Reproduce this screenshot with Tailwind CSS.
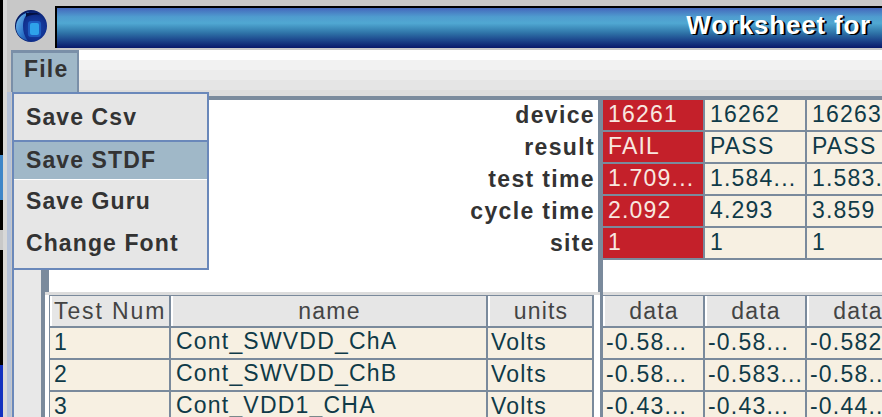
<!DOCTYPE html>
<html lang="en">
<head>
    <meta charset="UTF-8">
    <meta name="viewport" content="width=device-width, initial-scale=1.0">
    <title>Worksheet</title>
    <script src="https://cdn.jsdelivr.net/npm/@tailwindcss/browser@4"></script>
</head>
<body class="w-[882px] h-[417px] overflow-hidden relative flex bg-[#c8c8c8] font-['Liberation_Sans',Arial,sans-serif]">
    <!-- desktop edge behind the window -->
    <div class="w-[3px] h-full shrink-0 flex flex-col bg-black">
        <div class="h-[155px]"></div>
        <div class="h-[45px] bg-[#3f86c8]"></div>
        <div class="h-[30px] bg-black"></div>
        <div class="h-[20px] bg-[#c8c8c8]"></div>
        <div class="h-[115px] bg-black"></div>
        <div class="flex-1 bg-[#1030c0]"></div>
    </div>
    <div class="w-[4px] h-full shrink-0 bg-[#d8d8d8]"></div>

    <div class="w-[875px] h-full shrink-0 flex flex-col">
        <!-- title row -->
        <div class="h-[50px] shrink-0 flex pt-[6px]">
            <div class="w-[48px] shrink-0 pl-[8px] pt-[4px]">
                <svg width="32" height="32" viewBox="0 0 32 32">
                    <defs>
                        <radialGradient id="ball" cx="0.62" cy="0.58" r="0.62">
                            <stop offset="0" stop-color="#1a4ab0"/>
                            <stop offset="0.6" stop-color="#10308f"/>
                            <stop offset="1" stop-color="#061a60"/>
                        </radialGradient>
                        <linearGradient id="rim" x1="0" y1="0" x2="1" y2="1">
                            <stop offset="0" stop-color="#7cc4ee"/>
                            <stop offset="0.6" stop-color="#2f78cc"/>
                            <stop offset="1" stop-color="#14409c"/>
                        </linearGradient>
                    </defs>
                    <circle cx="16" cy="16" r="16" fill="url(#ball)"/>
                    <path d="M14 2 C6 4 1 10 1 17 C1 24 6 29 13 31 C9 26 8 21 8 16 C8 10 10 6 14 2 Z" fill="url(#rim)"/>
                    <path d="M11 3 H22 L25 5 C20 4 15 5 11 7 Z" fill="#04103f"/>
                    <rect x="13" y="11" width="13" height="16" rx="3" fill="#1d5cc0"/>
                    <rect x="15" y="13" width="9" height="12" rx="2" fill="#2ea2ea"/>
                </svg>
            </div>
            <div class="h-[42px] flex-1 border-l-2 border-t-2 border-black flex justify-end pr-[11px] pt-[1px] bg-[linear-gradient(to_bottom,#4468bc_0%,#4f9ccf_22%,#50a8d2_38%,#2f74a8_62%,#1f4c90_78%,#08186a_100%)]">
                <span class="text-white font-bold text-[26px] leading-[32px] tracking-[0.8px] whitespace-nowrap [text-shadow:2px_1px_0_#000]">Worksheet for</span>
            </div>
        </div>

        <!-- menu bar -->
        <div class="h-[42px] shrink-0 flex">
            <div class="ml-[4px] w-[68px] h-[42px] shrink-0 bg-[#a0b8c8] border-t-[3px] border-l-[2px] border-r-[2px] border-[#7a8fa8] pl-[11px] text-[#333] font-bold text-[23px] leading-[32px] tracking-[1.2px]">File</div>
            <div class="flex-1 bg-white pt-[10px]">
                <div class="h-[10px] bg-[#f2f2f2]"></div>
                <div class="h-[10px] bg-[#ececec]"></div>
                <div class="h-[10px] bg-[#e5e5e5]"></div>
                <div class="h-[2px] bg-[#dcdcdc]"></div>
            </div>
        </div>

        <!-- body -->
        <div class="flex-1 flex min-h-0">
            <div class="w-[4px] shrink-0 bg-[#b4c2da]"></div>
            <div class="w-[1px] shrink-0 bg-[#c8c8c8]"></div>
            <div class="w-[2px] shrink-0 bg-[#6a88ba]"></div>
            <div class="w-[27px] shrink-0 bg-[#e8e8e8]"></div>
            <div class="w-[4px] shrink-0 bg-[#7a8a9c]"></div>

            <div class="flex-1 min-w-0 flex flex-col">
                <!-- upper panes -->
                <div class="h-[200px] shrink-0 flex flex-col bg-white">
                    <div class="h-[4px] shrink-0 bg-[#dcdcdc]"></div>
                    <div class="h-[4px] shrink-0 bg-[#7a8a9c]"></div>
                    <div class="flex-1 min-h-0 flex">
                        <div class="w-[4px] shrink-0 bg-[#7a8a9c]"></div>
                        <div class="w-[549px] shrink-0 pr-[3px] text-right text-[#333] font-bold text-[23px] leading-[30px] tracking-[1.35px]">
                            <div class="h-[32px]">device</div>
                            <div class="h-[32px]">result</div>
                            <div class="h-[32px]">test time</div>
                            <div class="h-[32px]">cycle time</div>
                            <div class="h-[32px]">site</div>
                        </div>
                        <div class="w-[5px] shrink-0 bg-[#7a8a9c]"></div>
                        <div class="flex-1 min-w-0">
                            <div class="grid w-max grid-cols-[100px_100px_100px] auto-rows-[30px] gap-[2px] pb-[2px] bg-[#7a8a9c] text-[23px] leading-[28px] tracking-[1.2px] whitespace-nowrap">
                                <div class="bg-[#c4202a] text-[#f8e8e0] pl-[5px]">16261</div>
                                <div class="bg-[#f7f0e2] text-[#0f3a48] pl-[5px]">16262</div>
                                <div class="bg-[#f7f0e2] text-[#0f3a48] pl-[5px]">16263</div>
                                <div class="bg-[#c4202a] text-[#f8e8e0] pl-[5px]">FAIL</div>
                                <div class="bg-[#f7f0e2] text-[#0f3a48] pl-[5px]">PASS</div>
                                <div class="bg-[#f7f0e2] text-[#0f3a48] pl-[5px]">PASS</div>
                                <div class="bg-[#c4202a] text-[#f8e8e0] pl-[5px]">1.709...</div>
                                <div class="bg-[#f7f0e2] text-[#0f3a48] pl-[5px]">1.584...</div>
                                <div class="bg-[#f7f0e2] text-[#0f3a48] pl-[5px]">1.583...</div>
                                <div class="bg-[#c4202a] text-[#f8e8e0] pl-[5px]">2.092</div>
                                <div class="bg-[#f7f0e2] text-[#0f3a48] pl-[5px]">4.293</div>
                                <div class="bg-[#f7f0e2] text-[#0f3a48] pl-[5px]">3.859</div>
                                <div class="bg-[#c4202a] text-[#f8e8e0] pl-[5px]">1</div>
                                <div class="bg-[#f7f0e2] text-[#0f3a48] pl-[5px]">1</div>
                                <div class="bg-[#f7f0e2] text-[#0f3a48] pl-[5px]">1</div>
                            </div>
                        </div>
                    </div>
                </div>

                <!-- lower panes -->
                <div class="flex-1 min-h-0 flex bg-white text-[23px] leading-[28px] tracking-[1.2px] whitespace-nowrap">
                    <div class="w-[555px] shrink-0 pl-[4px] border-t-[3px] border-[#dcdcdc]">
                        <div class="grid w-max grid-cols-[119px_315px_104px] auto-rows-[30px] gap-[2px] py-[1px] pl-[1px] pr-[2px] bg-[#7a8a9c]">
                            <div class="bg-[#e6e6e6] text-[#444] leading-[31px] tracking-[1.9px] border-l-2 border-white pl-[2px]">Test Num</div>
                            <div class="bg-[#e6e6e6] text-[#444] leading-[31px] border-l-2 border-white text-center">name</div>
                            <div class="bg-[#e6e6e6] text-[#444] leading-[31px] border-l-2 border-white text-center">units</div>
                            <div class="bg-[#f7f0e2] text-[#0f3a48] pl-[4px]">1</div>
                            <div class="bg-[#f7f0e2] text-[#0f3a48] leading-[26px] pl-[5px]">Cont_SWVDD_ChA</div>
                            <div class="bg-[#f7f0e2] text-[#0f3a48] pl-[3px]">Volts</div>
                            <div class="bg-[#f7f0e2] text-[#0f3a48] pl-[4px]">2</div>
                            <div class="bg-[#f7f0e2] text-[#0f3a48] leading-[26px] pl-[5px]">Cont_SWVDD_ChB</div>
                            <div class="bg-[#f7f0e2] text-[#0f3a48] pl-[3px]">Volts</div>
                            <div class="bg-[#f7f0e2] text-[#0f3a48] pl-[4px]">3</div>
                            <div class="bg-[#f7f0e2] text-[#0f3a48] leading-[26px] pl-[5px]">Cont_VDD1_CHA</div>
                            <div class="bg-[#f7f0e2] text-[#0f3a48] pl-[3px]">Volts</div>
                        </div>
                    </div>
                    <div class="w-[3px] shrink-0 bg-[#7a8a9c]"></div>
                    <div class="flex-1 min-w-0 border-t-[3px] border-[#dcdcdc]">
                        <div class="grid w-max grid-cols-[100px_100px_100px] auto-rows-[30px] gap-[2px] py-[1px] bg-[#7a8a9c]">
                            <div class="bg-[#e6e6e6] text-[#444] leading-[31px] border-l-2 border-white text-center">data</div>
                            <div class="bg-[#e6e6e6] text-[#444] leading-[31px] border-l-2 border-white text-center">data</div>
                            <div class="bg-[#e6e6e6] text-[#444] leading-[31px] border-l-2 border-white text-center">data</div>
                            <div class="bg-[#f7f0e2] text-[#0f3a48] pl-[3px]">-0.58...</div>
                            <div class="bg-[#f7f0e2] text-[#0f3a48] pl-[3px]">-0.58...</div>
                            <div class="bg-[#f7f0e2] text-[#0f3a48] pl-[3px]">-0.582</div>
                            <div class="bg-[#f7f0e2] text-[#0f3a48] pl-[3px]">-0.58...</div>
                            <div class="bg-[#f7f0e2] text-[#0f3a48] pl-[3px]">-0.583...</div>
                            <div class="bg-[#f7f0e2] text-[#0f3a48] pl-[3px]">-0.58...</div>
                            <div class="bg-[#f7f0e2] text-[#0f3a48] pl-[3px]">-0.43...</div>
                            <div class="bg-[#f7f0e2] text-[#0f3a48] pl-[3px]">-0.43...</div>
                            <div class="bg-[#f7f0e2] text-[#0f3a48] pl-[3px]">-0.44...</div>
                        </div>
                    </div>
                </div>
            </div>
        </div>
    </div>

    <!-- File menu, open over the window -->
    <div class="absolute left-[12px] top-[92px] w-[197px] h-[178px] border-2 border-[#6a88ba] bg-[#e6e6e6] flex flex-col text-[#333] font-bold text-[23px] leading-[42px] tracking-[1.1px] whitespace-nowrap">
        <div class="h-[46px] pl-[12px] pt-[2px]">Save Csv</div>
        <div class="h-[40px] pl-[12px] leading-[36px] bg-[#a0b8c8] border-t-2 border-[#6a88ba] border-b border-b-white">Save STDF</div>
        <div class="h-[42px] pl-[12px]">Save Guru</div>
        <div class="h-[42px] pl-[12px]">Change Font</div>
    </div>
</body>
</html>
